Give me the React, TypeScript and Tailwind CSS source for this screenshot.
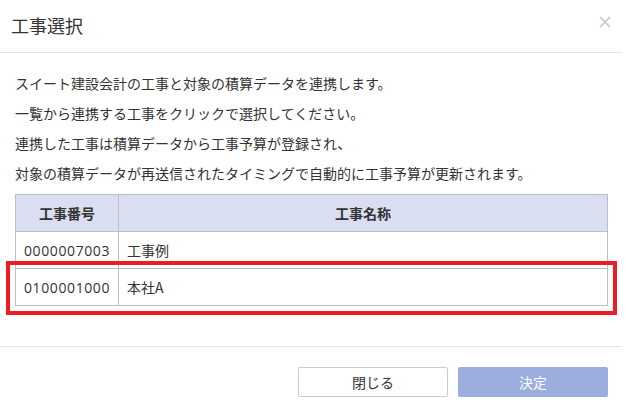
import React from "react";

const lines = [
  "スイート建設会計の工事と対象の積算データを連携します。",
  "一覧から連携する工事をクリックで選択してください。",
  "連携した工事は積算データから工事予算が登録され、",
  "対象の積算データが再送信されたタイミングで自動的に工事予算が更新されます。",
];

const rows = [
  { code: "0000007003", name: "工事例" },
  { code: "0100001000", name: "本社A" },
];

const App = () => {
  return (
    <div
      className="relative w-[626px] h-[411px] bg-white text-[#333] overflow-hidden"
      style={{ fontFamily: '"Noto Sans CJK JP", "Noto Sans", sans-serif' }}
    >
      <div className="w-[622px] flex flex-col">
        {/* Header */}
        <div className="h-[53px] flex border-b border-[#e5e5e5]">
          <h2 className="pl-[11px] pt-[12px] text-[18px] leading-[26px] font-normal">
            工事選択
          </h2>
          <button className="ml-auto mr-[11px] mt-[16px] w-[12px] h-[12px] self-start">
            <svg width="12" height="12" viewBox="0 0 12 12">
              <path
                d="M1 1 L11 11 M11 1 L1 11"
                stroke="#c6c6c6"
                strokeWidth="1.6"
                fill="none"
              />
            </svg>
          </button>
        </div>

        {/* Body */}
        <div className="pl-[15px] pr-[14px] pt-[15px] pb-[40px]">
          <div className="text-[14px] leading-[30px]">
            {lines.map((l) => (
              <p key={l}>{l}</p>
            ))}
          </div>

          {/* Table */}
          <div className="mt-[6px] border border-[#bfbfbf] text-[14px]">
            <div className="flex h-[37px] bg-[#d9dff0] border-b border-[#bfbfbf] font-bold">
              <div className="w-[103px] flex items-center justify-center border-r border-[#bfbfbf]">
                工事番号
              </div>
              <div className="flex-1 flex items-center justify-center">
                工事名称
              </div>
            </div>
            {rows.map((r, i) => (
              <div
                key={r.code}
                className={
                  i === 0
                    ? "flex h-[37px] border-b border-[#bfbfbf]"
                    : "flex h-[36px]"
                }
              >
                <div className="w-[103px] flex items-center pl-[8px] border-r border-[#bfbfbf] font-['Open_Sans'] tracking-[0.6px]">
                  {r.code}
                </div>
                <div className="flex-1 flex items-center pl-[8px]">{r.name}</div>
              </div>
            ))}
          </div>
        </div>

        {/* Footer */}
        <div className="border-t border-[#e5e5e5] pt-[20px] pr-[14px] flex justify-end gap-[10px]">
          <button className="w-[150px] h-[30px] bg-white border border-[#cccccc] rounded-[2px] text-[14px] text-[#333]">
            閉じる
          </button>
          <button className="w-[150px] h-[30px] bg-[#9caede] rounded-[2px] text-[14px] text-white">
            決定
          </button>
        </div>
      </div>

      {/* red highlight annotation */}
      <div className="absolute left-[6px] top-[261px] w-[611px] h-[54px] border-4 border-[#ed1c24] pointer-events-none" />
    </div>
  );
};

export default App;
